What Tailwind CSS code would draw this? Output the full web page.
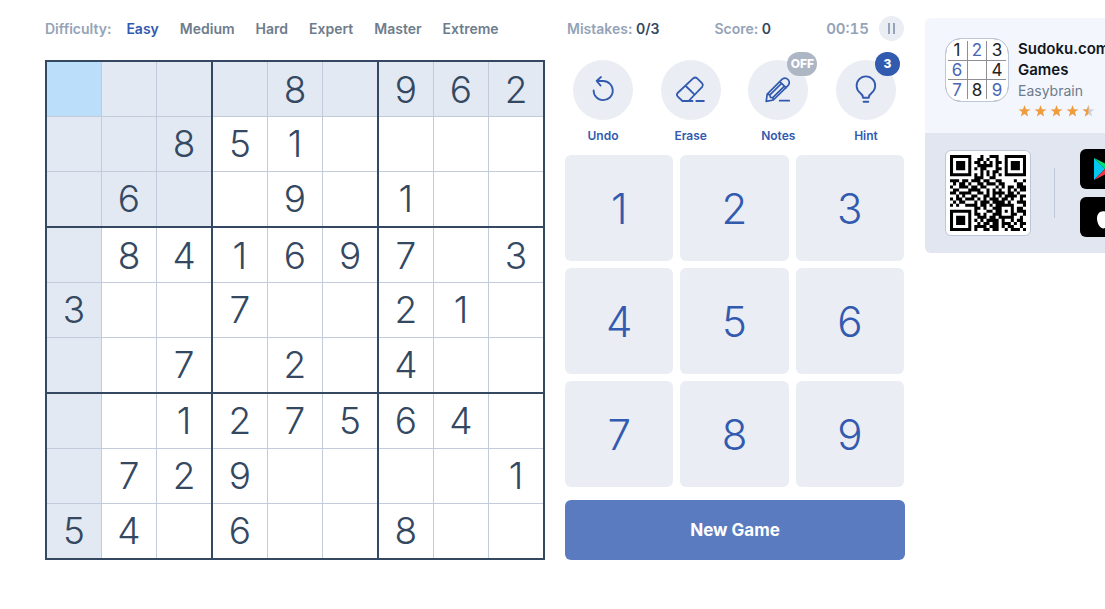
<!DOCTYPE html>
<html lang="en">
<head>
<meta charset="utf-8">
<meta name="viewport" content="width=device-width, initial-scale=1">
<title>Sudoku</title>
<script src="https://cdn.jsdelivr.net/npm/@tailwindcss/browser@4"></script>
</head>
<body class="overflow-x-hidden bg-white font-['Inter',sans-serif] text-[#344861]">
<main class="flex items-start gap-5 overflow-hidden pt-4 pb-12 pl-[45px]">

  <section class="w-[500px] flex-none">
    <nav class="flex h-[25px] items-center pt-px text-sm font-semibold text-[#6e7c8c]">
      <span class="mr-[15px] text-[#94a3b7]">Difficulty:</span>
      <div class="flex gap-[21px]">
        <a href="#" class="text-[#325aaf]">Easy</a>
        <a href="#">Medium</a>
        <a href="#">Hard</a>
        <a href="#">Expert</a>
        <a href="#">Master</a>
        <a href="#">Extreme</a>
      </div>
    </nav>
    <table id="board" class="mt-[19px] h-[500px] w-full table-fixed border-collapse border-2 border-[#344861] text-center text-[37px] leading-none font-light"><tbody></tbody></table>
  </section>

  <section class="w-[340px] flex-none">
    <div class="flex h-[25px] items-center justify-between pr-px pl-0.5 text-sm font-semibold text-[#94a3b7]">
      <span class="pt-px">Mistakes: <span class="text-[#344861]">0/3</span></span>
      <span class="pt-px">Score: <span class="text-[#344861]">0</span></span>
      <span class="flex items-center gap-2.5"><span class="pt-px text-[15px] tabular-nums">00:15</span>
        <button aria-label="Pause" class="flex size-[25px] items-center justify-center gap-[3px] rounded-full bg-[#eaedf4]"><span class="h-[11px] w-0.5 bg-[#94a3b7]"></span><span class="h-[11px] w-0.5 bg-[#94a3b7]"></span></button>
      </span>
    </div>

    <div class="mt-[19px] mr-px flex justify-between px-2 text-xs font-semibold text-[#325aaf]">
      <button class="relative flex w-[60px] flex-col items-center gap-2">
        <svg class="size-[60px] rounded-full bg-[#eaedf4]" viewBox="0 0 60 60" fill="none" stroke="#325aaf" stroke-width="1.8" stroke-linecap="round" stroke-linejoin="round"><path d="M20.6 30.3a9.6 9.6 0 1 0 9.6-9.3H23.8M28 17l-4.4 4 4 4.6"/></svg>
        <span>Undo</span>
      </button>
      <button class="relative flex w-[60px] flex-col items-center gap-2">
        <svg class="size-[60px] rounded-full bg-[#eaedf4]" viewBox="0 0 60 60" fill="none" stroke="#325aaf" stroke-width="1.8" stroke-linecap="round" stroke-linejoin="round"><path d="M31.5 41H21.4l-4.8-4.7q-1.4-1.7 0-3.3L32.4 18.2q1.800-1.400 3.500 0l5.300 5.200q1.400 1.700 0 3.400L27.600 41M24.800 26l8.800 8.600M35.300 41h7.600"/></svg>
        <span>Erase</span>
      </button>
      <button class="relative flex w-[60px] flex-col items-center gap-2">
        <svg class="size-[60px] rounded-full bg-[#eaedf4]" viewBox="0 0 60 60" fill="none" stroke="#325aaf" stroke-width="1.7" stroke-linecap="round" stroke-linejoin="round"><path d="M19.2 34.2 34.2 19.2q3-2.4 5.8.3 2.5 2.9.2 5.8L25.4 40 18.2 41.4ZM31.8 21.6l6.4 6.2M19.2 34.2l2.700.6.5 2.500 2.400.4.6 2.300M21.900 34.800 33.600 23.400M24.800 37.700 36.400 26.200M31.600 40.700h9.600"/></svg>
        <span>Notes</span>
        <span class="absolute -top-2 left-[39px] flex h-6 w-[30px] items-center justify-center rounded-full bg-[#adb6c4] font-extrabold text-white">OFF</span>
      </button>
      <button class="relative flex w-[60px] flex-col items-center gap-2">
        <svg class="size-[60px] rounded-full bg-[#eaedf4]" viewBox="0 0 60 60" fill="none" stroke="#325aaf" stroke-width="1.9" stroke-linecap="round" stroke-linejoin="round"><path d="M27 37.8c0-2.2-.8-3.4-2.7-4.7a9.3 9.3 0 1 1 11.2 0c-1.900 1.300-2.700 2.500-2.700 4.700ZM27.600 41.800h4.700"/></svg>
        <span>Hint</span>
        <span class="absolute -top-2 left-[39px] flex h-6 w-[25px] items-center justify-center rounded-full bg-[#325aaf] font-extrabold text-white">3</span>
      </button>
    </div>

    <div id="pad" class="mt-[11px] mr-px grid auto-rows-[106px] grid-cols-3 gap-[7px] text-[42px] leading-none font-light text-[#325aaf]"></div>
    <button class="mt-[13px] h-[60px] w-full rounded-md bg-[#5a7bc0] pt-px text-[17px] font-bold text-white">New Game</button>
  </section>

  <aside class="mt-0.5 w-[300px] flex-none overflow-hidden rounded-md bg-[#f3f6fc]">
    <div class="flex h-[115px] gap-[9px] pt-5 pl-5">
      <div class="grid size-16 flex-none grid-cols-[20px_18px_20px] grid-rows-[20px_18px_20px] place-content-center gap-px overflow-hidden rounded-2xl border border-[#bec6d9] bg-[#8d8f94] text-[17px] leading-none text-[#222] shadow-[inset_0_0_0_2px_white] [&>span]:flex [&>span]:items-center [&>span]:justify-center [&>span]:bg-white">
        <span>1</span><span class="text-[#4a66b5]">2</span><span>3</span>
        <span class="text-[#4a66b5]">6</span><span></span><span>4</span>
        <span class="text-[#4a66b5]">7</span><span>8</span><span class="text-[#4a66b5]">9</span>
      </div>
      <div>
        <h2 class="text-[15px] leading-[21px] font-semibold text-[#10151c]">Sudoku.com<br>Games</h2>
        <p class="text-sm leading-[22px] text-[#6e7c8c]">Easybrain</p>
        <svg class="mt-[3px] h-3 w-[77px]" viewBox="0 0 77 12">
          <defs><path id="star" d="M6.500 0l1.500 4.300 4.500.1-3.600 2.700 1.300 4.400-3.700-2.600-3.700 2.600 1.300-4.400L.5 4.400l4.500-.1z"/><clipPath id="half"><path d="M0 0h6.500v12H0z"/></clipPath></defs>
          <g fill="#f09b3c"><use href="#star"/><use href="#star" x="16"/><use href="#star" x="32"/><use href="#star" x="48"/></g>
          <use href="#star" x="64" fill="#ccd3e0"/><g transform="translate(64)" clip-path="url(#half)"><use href="#star" fill="#f09b3c"/></g>
        </svg>
      </div>
    </div>
    <div class="flex h-[120px] items-center bg-[#e2e6f0] pl-5">
      <div class="flex size-[86px] flex-none items-center justify-center rounded-md border border-[#bec6d9] bg-white">
        <svg class="size-[76px]" viewBox="0 0 25 25" role="img" aria-label="QR code"><path id="qr" fill="#000"/></svg>
      </div>
      <div class="ml-[23px] h-[50px] w-px bg-[#bec6d9]"></div>
      <div class="ml-[25px] flex flex-col gap-2">
        <a href="#" aria-label="Google Play" class="flex h-10 w-[125px] items-center rounded-md bg-black pl-3.5">
          <svg class="h-6 w-[22px]" viewBox="0 0 22 24"><path fill="#00c8f0" d="M0 1v22l11-11z"/><path fill="#00e36f" d="M0 1l16 8-5 3z"/><path fill="#f0374a" d="M0 23l16-8-5-3z"/><path fill="#ffc900" d="M11 12l5-3.500 6 3.500-6 3.500z"/></svg>
        </a>
        <a href="#" aria-label="App Store" class="flex h-10 w-[125px] items-center rounded-md bg-black pl-[17px]">
          <svg class="h-6 w-5" viewBox="0 0 20 24" fill="#fff"><path d="M14 0c.2 2.500-2 5-4.300 5C9.400 2.700 11.700.3 14 0zM18 8.500c-4 2.500-3 7.500 1 9-1.500 4-3.500 6-5.300 6-1.400 0-2-.8-3.700-.8s-2.400.8-3.700.8C3 23.500 0 18 0 13.500 0 9 2.800 6.200 6 6.200c1.700 0 3 1 4 1s2.600-1.100 4.600-1.100c1.400 0 2.700.8 3.400 2.400z"/></svg>
        </a>
      </div>
    </div>
  </aside>
</main>
<script>
const puzzle = ['....8.962', '..851....', '.6..9.1..', '.841697.3', '3..7..21.', '..7.2.4..', '..127564.', '.729....1', '54.6..8..'];
document.querySelector('#board tbody').innerHTML = puzzle.map((row, r) => '<tr>' + [...row].map((n, c) => {
  const peer = r === 0 || c === 0 || (r < 3 && c < 3);
  const bg = r + c === 0 ? 'bg-[#bbdefb]' : peer ? 'bg-[#e2e9f3]' : 'bg-white';
  const right = c % 3 === 2 ? 'border-r-2 border-r-[#344861]' : 'border-r border-r-[#c3cad9]';
  const bottom = r % 3 === 2 ? 'border-b-2 border-b-[#344861]' : 'border-b border-b-[#c3cad9]';
  return `<td class="p-0 ${bg} ${right} ${bottom}">${n === '.' ? '' : n}</td>`;
}).join('') + '</tr>').join('');

document.getElementById('pad').innerHTML = [1, 2, 3, 4, 5, 6, 7, 8, 9]
  .map(n => `<button class="rounded-md bg-[#eaedf4] pt-0.5">${n}</button>`).join('');

const modules = [
  '1111111000100111001111111',
  '1000001001101001001000001',
  '1011101011010101101011101',
  '1011101001111101001011101',
  '1011101010110001101011101',
  '1000001000101011001000001',
  '1111111010101010101111111',
  '0000000011100110000000000',
  '1110110111011001100001001',
  '0101101001101110110000110',
  '1001110110110001010110111',
  '0110001111001010100101011',
  '1101111001101011110110100',
  '0010100110011010101111011',
  '1011011101010111011010010',
  '0101100010111011110100111',
  '1010011110110101111110001',
  '0000000011010011100010110',
  '1111111010001101101010111',
  '1000001011010011100011001',
  '1011101001110110111110010',
  '1011101010101111010010110',
  '1011101001011011011101011',
  '1000001011110111010110010',
  '1111111010011011001011101'
];
document.getElementById('qr').setAttribute('d', modules.map((row, y) => [...row].map((m, x) => m === '1' ? `M${x} ${y}h1v1h-1z` : '').join('')).join(''));
</script>
</body>
</html>
